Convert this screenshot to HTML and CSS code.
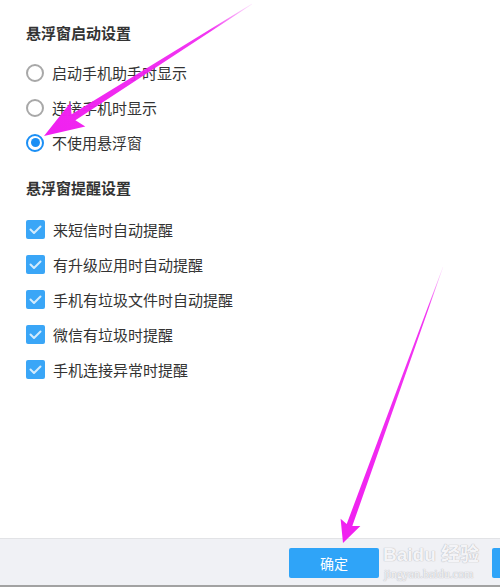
FILE: index.html
```html
<!DOCTYPE HTML>
<html lang="zh-CN">

<head>
  <meta name="viewport" content="width=device-width, initial-scale=1" charset="utf-8">
  <title>悬浮窗设置</title>
  <link rel="stylesheet" href="styles.css">
</head>

<body>
  <div class="page">
    <div class="settings">
      <h2 class="group-title">悬浮窗启动设置</h2>
      <div class="option-list">
        <label class="option"><span class="radio"></span>启动手机助手时显示</label>
        <label class="option"><span class="radio"></span>连接手机时显示</label>
        <label class="option"><span class="radio radio-on"></span>不使用悬浮窗</label>
      </div>

      <h2 class="group-title group-second">悬浮窗提醒设置</h2>
      <div class="option-list">
        <label class="option"><span class="check"><svg viewBox="0 0 19 19"><path d="M4.5 9.5 L8 13 L14.5 6.5" /></svg></span>来短信时自动提醒</label>
        <label class="option"><span class="check"><svg viewBox="0 0 19 19"><path d="M4.5 9.5 L8 13 L14.5 6.5" /></svg></span>有升级应用时自动提醒</label>
        <label class="option"><span class="check"><svg viewBox="0 0 19 19"><path d="M4.5 9.5 L8 13 L14.5 6.5" /></svg></span>手机有垃圾文件时自动提醒</label>
        <label class="option"><span class="check"><svg viewBox="0 0 19 19"><path d="M4.5 9.5 L8 13 L14.5 6.5" /></svg></span>微信有垃圾时提醒</label>
        <label class="option"><span class="check"><svg viewBox="0 0 19 19"><path d="M4.5 9.5 L8 13 L14.5 6.5" /></svg></span>手机连接异常时提醒</label>
      </div>
    </div>

    <div class="footer">
      <button type="button" class="btn">确定</button>
      <button type="button" class="btn" aria-label="取消"></button>
    </div>
  </div>

  <!-- watermark -->
  <div class="watermark">
    <span class="wm-logo">Baidu 经验</span>
    <span class="wm-url">jingyan.baidu.com</span>
  </div>

  <!-- annotation arrows -->
  <svg class="arrows" width="500" height="587" viewBox="0 0 500 587">
    <defs>
      <linearGradient id="fade1" x1="252" y1="4" x2="44" y2="136" gradientUnits="userSpaceOnUse">
        <stop offset="0" stop-color="#f020f0" stop-opacity="0.1" />
        <stop offset="0.2" stop-color="#f020f0" stop-opacity="0.9" />
        <stop offset="1" stop-color="#f020f0" />
      </linearGradient>
      <linearGradient id="fade2" x1="443" y1="267" x2="343" y2="543" gradientUnits="userSpaceOnUse">
        <stop offset="0" stop-color="#f020f0" stop-opacity="0.1" />
        <stop offset="0.15" stop-color="#f020f0" stop-opacity="0.9" />
        <stop offset="1" stop-color="#f020f0" />
      </linearGradient>
    </defs>
    <polygon fill="url(#fade1)" points="252.2,4.3 251.8,3.7 71.6,114.2 70.3,102.8 44,136 85.3,126.4 75.4,120.2" />
    <polygon fill="url(#fade2)" points="443.2,267.1 442.8,266.9 346.7,524.1 340.6,518.7 343,543 360.4,525.9 352.3,526.1" />
  </svg>
</body>

</html>
```

FILE: styles.css
```css
body {
  margin: 0;
  padding: 0;
  background-color: #fff;
  font-family: "Noto Sans CJK SC", "Noto Sans", sans-serif;
  color: #333;
}

.page {
  height: 587px;
  display: flex;
  flex-direction: column;
  overflow: hidden;
}

.settings {
  flex: 1;
  padding: 23px 0 0 26px;
}

.group-title {
  margin: 0;
  font-size: 15px;
  line-height: 20px;
  font-weight: bold;
  color: #333;
}

.group-second {
  margin-top: 18px;
}

.option-list {
  display: flex;
  flex-direction: column;
  margin-top: 12px;
}

.group-second + .option-list {
  margin-top: 14px;
}

.option {
  height: 35px;
  display: flex;
  align-items: center;
  gap: 8px;
  font-size: 15px;
  color: #333;
}

/* radio */
.radio {
  width: 18px;
  height: 18px;
  box-sizing: border-box;
  border: 2px solid #a8a8a8;
  border-radius: 50%;
  display: flex;
  align-items: center;
  justify-content: center;
}

.radio-on {
  border-color: #1b8ff5;
}

.radio-on::after {
  content: '';
  width: 9px;
  height: 9px;
  border-radius: 50%;
  background-color: #1b8ff5;
}

/* checkbox */
.check {
  width: 19px;
  height: 19px;
  border-radius: 2px;
  background-color: #3aa6f7;
  display: flex;
}

.check svg {
  width: 19px;
  height: 19px;
}

.check path {
  fill: none;
  stroke: #d4ebfd;
  stroke-width: 2;
  stroke-linecap: round;
  stroke-linejoin: round;
}

/* footer */
.footer {
  height: 49px;
  box-sizing: border-box;
  border-top: 1px solid #e2e3e6;
  border-bottom: 2px solid #a2a2a2;
  background-color: #f0f1f5;
  display: flex;
  align-items: center;
  gap: 113px;
  padding-left: 289px;
  padding-top: 1px;
}

.btn {
  flex: none;
  width: 90px;
  height: 30px;
  border: none;
  border-radius: 2px;
  background-color: #2fa4f8;
  color: #fff;
  font-family: "Noto Sans CJK SC", sans-serif;
  font-size: 14px;
  cursor: pointer;
}

/* overlays */
.watermark {
  position: absolute;
  left: 383px;
  top: 545px;
  display: flex;
  flex-direction: column;
  align-items: flex-start;
  color: #f6f6f8;
  text-shadow: 0 0 1px #a8a8ae, 0 0 1px #a8a8ae;
  opacity: 0.75;
  line-height: 1;
}

.wm-logo {
  font-family: "Liberation Sans", "Noto Sans CJK SC", sans-serif;
  font-size: 19px;
  font-weight: bold;
}

.wm-url {
  margin-top: 4px;
  margin-left: 1px;
  font-family: "Liberation Serif", serif;
  font-size: 12px;
}

.arrows {
  position: absolute;
  left: 0;
  top: 0;
  pointer-events: none;
}
```
